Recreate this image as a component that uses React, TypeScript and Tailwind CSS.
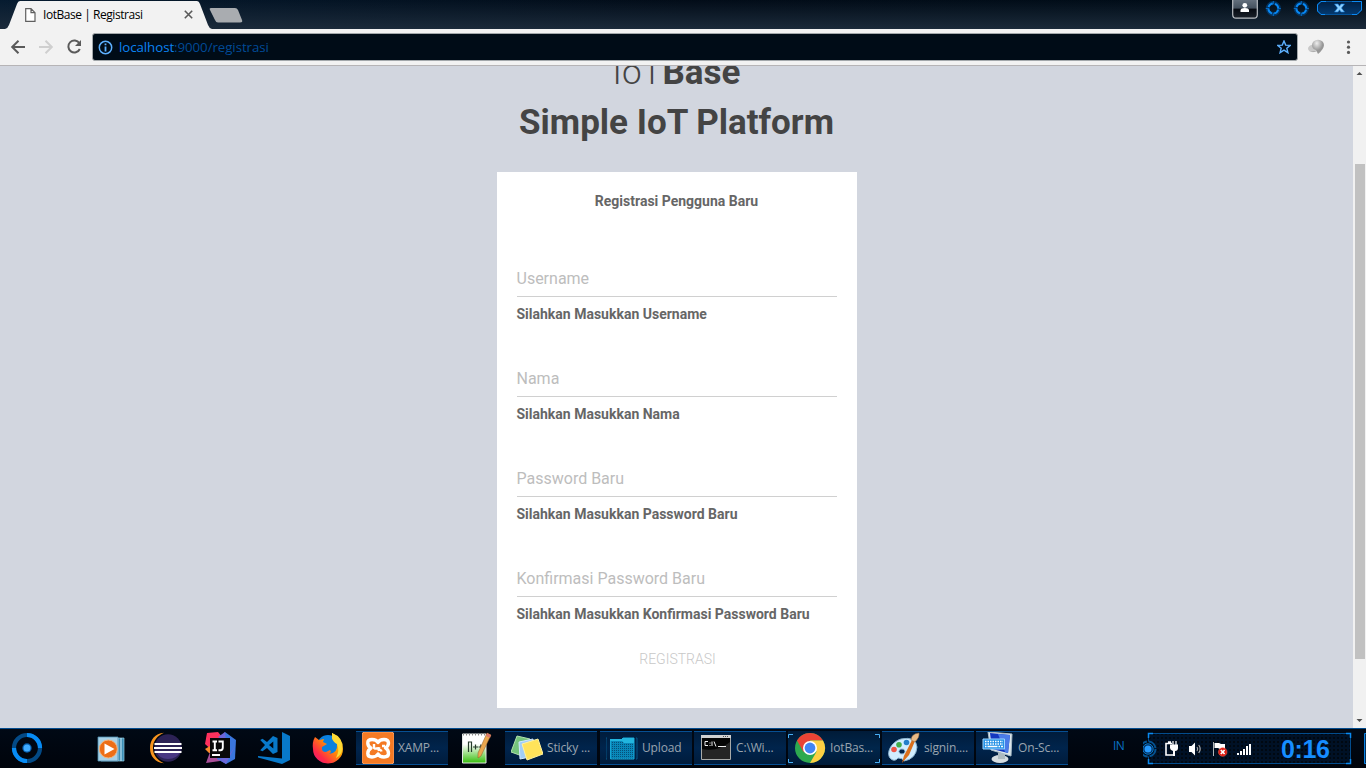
import React from "react";

const ui = "font-['Open_Sans','Noto_Sans',sans-serif]";

function TabStrip() {
  return (
    <div className="relative flex h-[29px] shrink-0 bg-gradient-to-r from-[#061b30] via-[#020c18] to-[#000d18]">
      <div className="absolute inset-0 bg-gradient-to-b from-transparent to-[#1b2a3a]" />
      <div className="relative flex h-[29px] w-[212px] items-center">
        <svg className="absolute inset-0" width="212" height="29" viewBox="0 0 212 29">
          <path d="M5 29 Q8 28 9 25 L17 4 Q18 1 20 1 H197 Q199 1 200 4 L208 25 Q209 28 212 29Z" fill="#f2f2f2" />
        </svg>
        <svg className="relative ml-[25px]" width="11" height="14" viewBox="0 0 11 14" fill="#fff" stroke="#5f5f5f" strokeWidth="1.2">
          <path d="M.7.7H6L10 4.7V13.3H.7ZM6 .7V4.7H10" />
        </svg>
        <span className={`relative ml-[7px] w-[141px] whitespace-nowrap text-[12px] leading-[14px] tracking-[-0.45px] text-black ${ui}`}>IotBase | Registrasi</span>
        <svg className="relative" width="9" height="9" viewBox="0 0 9 9" stroke="#5a5a5a" strokeWidth="1.6"><path d="M.8.8 8.2 8.2M8.2.8.8 8.2" /></svg>
      </div>
      <svg className="relative -ml-[3px]" width="35" height="29" viewBox="0 0 35 29">
        <path d="M2 8H26Q28 8 29 10L33 20Q34 22.5 31 22.5H9Q7 22.5 6 20L1 10Q0 8 2 8Z" fill="#a9acb0" />
      </svg>
      <div className="grow" />
      <svg className="relative" width="136" height="20" viewBox="1230 0 136 20">
        <defs>
          <linearGradient id="usr" x1="0" y1="0" x2="0" y2="1"><stop offset="0" stopColor="#6b7784" /><stop offset=".5" stopColor="#45525f" /><stop offset=".55" stopColor="#070b12" /><stop offset="1" stopColor="#1b222b" /></linearGradient>
          <linearGradient id="cls" x1="0" y1="0" x2="0" y2="1"><stop offset="0" stopColor="#012044" /><stop offset="1" stopColor="#043a70" /></linearGradient>
        </defs>
        <path d="M1232.7 -2V14.5Q1232.7 18.2 1236 18.2H1254Q1257.3 18.2 1257.3 14.5V-2Z" fill="url(#usr)" stroke="#b9bdc2" strokeWidth="1.2" />
        <circle cx="1244.8" cy="5.3" r="2.4" fill="#fff" /><path d="M1240.5 12V10Q1241 8 1244.8 8T1249 10V12Z" fill="#fff" />
        {[1273.3, 1301.3].map((x) => (
          <g key={x} fill="none">
            <circle cx={x} cy="8.5" r="5.6" stroke="#02417e" strokeWidth="4" opacity=".7" />
            <circle cx={x} cy="8.5" r="5" stroke="#0889f5" strokeWidth="1.9" strokeDasharray="5.5 2.35" strokeDashoffset="-1.2" />
            <path d={`M${x} 1V4M${x} 13V16M${x - 7.5} 8.5H${x - 4}M${x + 4} 8.5H${x + 7.5}`} stroke="#087ade" strokeWidth=".8" />
          </g>
        ))}
        <path d="M1317.5 4V11L1321 14.5H1357L1361.5 10V1.5H1321Z" fill="url(#cls)" stroke="#04559d" />
        <path d="M1317.5 11V5L1321 1.5H1326M1352 1.5H1361.5V10L1357 14.5H1352M1317.5 11 1321 14.5H1325" fill="none" stroke="#0b89f3" />
        <path d="M1334.5 4H1338L1339.5 6.2 1341 4H1344.5L1341.5 8 1344.5 12H1341L1339.5 9.8 1338 12H1334.5L1337.5 8Z" fill="#8dd0ff" stroke="#1379d7" strokeWidth=".6" />
      </svg>
    </div>
  );
}

function Toolbar() {
  return (
    <div className="flex h-[37px] shrink-0 items-center border-b border-[#b6b4b6] bg-[#f2f2f2]">
      <svg width="92" height="36" viewBox="0 29 92 36" fill="none" strokeWidth="2">
        <path d="M25 47H12.5M18.5 40.7 12.2 47 18.5 53.3" stroke="#5a5a5a" />
        <path d="M39 47H51.5M45.5 40.7 51.8 47 45.5 53.3" stroke="#cfcfcf" />
        <path d="M79.4 43.2A6 6 0 1 0 79.8 49" stroke="#5a5a5a" />
        <path d="M81 40V46H75Z" fill="#5a5a5a" />
      </svg>
      <div className={`flex h-[28px] w-[1206px] items-center rounded-[3px] border border-[#a3a8ab] bg-[#000c17] text-[13.3px] ${ui}`}>
        <svg className="ml-[5px] shrink-0" width="15" height="15" viewBox="0 0 15 15" fill="none" stroke="#5db1ff">
          <circle cx="7.5" cy="7.5" r="6.2" strokeWidth="1.5" /><path d="M7.5 6.4V11.4M7.5 3.6V5.2" strokeWidth="1.8" />
        </svg>
        <span className="ml-[6px] whitespace-nowrap pt-[2px] tracking-[-0.07px] text-[#004a96]"><span className="text-[#0b83f3]">localhost</span>:9000/registrasi</span>
        <svg className="mr-[6px] ml-auto" width="14" height="14" viewBox="0 0 14 14" fill="none" stroke="#5db1ff" strokeWidth="1.4">
          <path d="M7 1 8.7 5.1 13.2 5.4 9.8 8.2 10.9 12.7 7 10.2 3.1 12.7 4.2 8.2.8 5.4 5.3 5.1Z" />
        </svg>
      </div>
      <svg width="68" height="36" viewBox="1298 29 68 36">
        <defs><radialGradient id="globe" cx=".4" cy=".25"><stop stopColor="#eee" /><stop offset="1" stopColor="#969696" /></radialGradient></defs>
        <ellipse cx="1313" cy="48.5" rx="5" ry="3.7" fill="#c9c9c9" /><path d="M1309 51 1317 51 1314 52Z" fill="#aaa" />
        <path d="M1312 45A6 5.3 0 0 1 1324 45Q1324 49 1318 54L1316 50Q1312 49 1312 45Z" fill="url(#globe)" />
        <g fill="#5a5a5a"><circle cx="1348.5" cy="42" r="1.6" /><circle cx="1348.5" cy="47.2" r="1.6" /><circle cx="1348.5" cy="52.4" r="1.6" /></g>
      </svg>
    </div>
  );
}

const fields = ["Username", "Nama", "Password Baru", "Konfirmasi Password Baru"];

function RegistrationPage() {
  return (
    <div className="flex min-h-0 flex-1 bg-[#d2d6df] font-[Roboto,sans-serif]">
      <main className="flex min-w-0 grow flex-col items-center overflow-hidden">
        <h1 className="-mt-[18px] h-[106px] shrink-0 text-center text-[35px] leading-[50px] font-bold text-[#444]">
          <div className="whitespace-nowrap"><span className="font-light">IoT</span>Base</div>
          <div className="whitespace-nowrap">Simple IoT Platform</div>
        </h1>
        <form className="mt-[18px] flex h-[536px] w-[360px] shrink-0 flex-col bg-white px-5 pt-[19px] text-[14px] leading-5 text-[#666]">
          <div className="mb-[47px] text-center font-bold">Registrasi Pengguna Baru</div>
          {fields.map((f) => (
            <label key={f} className="block h-[100px]">
              <span className="block h-[39px] border-b border-[#d0d0d0] pt-[9px] text-[16px] leading-[23px] text-[#bdbdbd]">{f}</span>
              <span className="mt-[7px] block font-bold whitespace-nowrap">Silahkan Masukkan {f}</span>
            </label>
          ))}
          <button type="button" className="-mt-[9px] pl-[2px] text-center leading-5 font-light text-[#c8c8c8]">REGISTRASI</button>
        </form>
      </main>
      <div className="flex w-[13px] shrink-0 flex-col items-center bg-[#f1f1f1]">
        <svg width="13" height="98" viewBox="0 0 13 98"><path d="M3.5 9 6.5 6 9.5 9Z" fill="#505050" /></svg>
        <div className="h-[495px] w-[10px] bg-[#c1c1c1]" />
        <svg className="mt-auto" width="13" height="14" viewBox="0 0 13 14"><path d="M3.5 5H9.5L6.5 8Z" fill="#505050" /></svg>
      </div>
    </div>
  );
}

function Icon({ children }: { children: React.ReactNode }) {
  return <svg className="shrink-0" width="32" height="32" viewBox="0 0 32 32">{children}</svg>;
}

const StartOrb = () => (
  <Icon>
    <g fill="none" strokeWidth="4.2">
      <circle cx="16" cy="16" r="13" stroke="#034a86" />
      <path d="M16 3A13 13 0 0 1 29 16M16 29A13 13 0 0 1 3 16" stroke="#078cf5" />
    </g>
    <circle cx="16" cy="16" r="4.7" fill="#045aa8" /><circle cx="16" cy="16" r="3.5" fill="#40abff" />
  </Icon>
);

const MediaPlayer = () => (
  <Icon>
    <g transform="translate(-2 0)">
      <path d="M7 6H30V29H7Z" fill="#3d8eb5" stroke="#91cce2" strokeWidth=".7" />
      <path d="M27 6V29M24 6V29" stroke="#d2eefb" />
      <path d="M4 5H24V29H4Z" fill="#a7d0e6" stroke="#4b91b2" strokeWidth=".8" />
      <circle cx="14.3" cy="17" r="9" fill="#ed6e16" stroke="#f3b37b" /><path d="M10.5 11.5V22.5L20.5 17Z" fill="#fff" />
    </g>
  </Icon>
);

const Eclipse = () => (
  <Icon>
    <path d="M14 .8C5 1.5 0 8 0 16S5 30.5 14 31.2C7 28 3 23 3 16S7 4 14 .8Z" fill="#f7941e" />
    <circle cx="18" cy="16" r="13.7" fill="#2c2255" /><path d="M7 20H30Q27 27 18 27T7 20Z" fill="#493783" />
    <path d="M4.5 11.9H31.5M4 16H32M4.5 20.1H31.5" stroke="#fff" strokeWidth="2" />
  </Icon>
);

const IntelliJ = () => (
  <Icon>
    <path d="M3 1 14 0 18 5 12 22 1 12Z" fill="#fe315d" /><path d="M1 17 6 14 10 21 5 21Z" fill="#f98b2b" />
    <path d="M6 20 19 24 16 29 2 31Z" fill="#aa4f99" /><path d="M17 6 21 0 32 8 31 27 22 32 13 27Z" fill="#3a76dd" />
    <path d="M14 5 21 0 22 9ZM24 25 31 14 22 32 14 27Z" fill="#6d67d8" />
    <path d="M6 6H26V26H6Z" fill="#080808" />
    <path d="M8.5 9.5H13M10.8 9.5V18M8.5 18.2H13M14.5 9.5H18.8V15.5Q18.8 18.2 16.5 18.2H14.5M8 23H16" fill="none" stroke="#fff" strokeWidth="1.9" />
  </Icon>
);

const VSCode = () => (
  <Icon>
    <path d="M24 0 32 4V28L24 32 0 25.5V24L24 26.5Z" fill="#0879ca" />
    <path fillRule="evenodd" d="M15 4 19.5 6V20L15 22 9 16 4.5 19.3 2.2 18.2 7 13 2.2 8 4.5 6.8 9 10ZM15.3 9.5 11 13 15.3 16.5Z" fill="#0879ca" />
  </Icon>
);

const Firefox = () => (
  <Icon>
    <defs><linearGradient id="fox" x1="1" y1="0" x2="0" y2="1"><stop stopColor="#fff44f" /><stop offset=".4" stopColor="#ff9800" /><stop offset=".75" stopColor="#ff2947" /><stop offset="1" stopColor="#e31587" /></linearGradient></defs>
    <circle cx="16" cy="14" r="11" fill="#0a80df" />
    <path d="M3 5 7 8 12 7 11 10 15 12 10 15Q9 20 14 20L18 18Q20 20 17 22Q26 21 25 12 24 8 20 7L20 1Q31 5 31 17A15 14.5 0 0 1 1 17Q0 10 3 5Z" fill="url(#fox)" />
    <path d="M20 1Q31 6 30 17 30 23 24 26 28 18 25 12 21 10 20 6Z" fill="#ffdb35" />
  </Icon>
);

const Xampp = () => (
  <Icon>
    <rect width="32" height="32" rx="3" fill="#f47a24" stroke="#f8a064" />
    <path d="M16 10.5Q14.5 7.5 10 7.5T5.8 11Q5.8 14.5 9 16Q5.8 18 5.8 21.5Q5.8 25 10 25T16 22Q17.5 25 22 25T26.5 21.5Q26.5 17.5 23.5 16Q26.5 14 26.5 11Q26.5 7.5 22 7.5T16 10.5Z" fill="none" stroke="#fff" strokeWidth="3.4" strokeLinejoin="round" />
    <path d="M12 12V15.5Q12 17 14.5 16.5T18 16.5M20 14H23M15.5 18Q19 17 19.5 19.5" fill="none" stroke="#fff" strokeWidth="2.4" />
  </Icon>
);

const NotepadPP = () => (
  <Icon>
    <defs><linearGradient id="npp" x1="0" y1="0" x2="0" y2="1"><stop offset=".35" stopColor="#fff" /><stop offset="1" stopColor="#36be0b" /></linearGradient></defs>
    <path d="M2.5 2H26V31H2.5Z" fill="url(#npp)" stroke="#e4e8e4" /><path d="M3 2.5H26" stroke="#8a8a8a" strokeWidth="2" strokeDasharray="1 2" />
    <path d="M8.5 20V10H11.5V20M13 15H18M15.5 12.5V17.5M18.5 15H23M20.8 12.5V17.5" fill="none" stroke="#263b2c" strokeWidth="1.2" />
    <path d="M18 26 18 21 27 1 31 3 21 24Z" fill="#e9a74f" stroke="#8d5b24" strokeWidth=".5" /><path d="M27 1 31 3 30 6 26 4Z" fill="#d9796a" />
  </Icon>
);

const Sticky = () => (
  <Icon>
    <path d="M6 4 19 7 14 25 0 20Z" fill="#75c47c" stroke="#b3e2ac" /><path d="M8 10 22 7 24 24 9 27Z" fill="#a1cef8" stroke="#d2e9ff" />
    <path d="M11 12 27 7 32 22 16 28Z" fill="#ffe35a" stroke="#fff2a0" />
  </Icon>
);

const Folder = () => (
  <Icon>
    <defs><pattern id="mesh" width="2" height="2" patternUnits="userSpaceOnUse"><path d="M0 0H2V2H0Z" fill="#0987b9" /><path d="M0 0H1V1H0Z" fill="#055079" /></pattern></defs>
    <path d="M4.5 8H17V6H28V27H4.5Z" fill="url(#mesh)" stroke="#16a6d6" /><path d="M4 7H16V6H28V11H18L16 9H4Z" fill="#22b5de" />
    <path d="M1 6H0V27H1M30 6H31V27H30" stroke="#075787" fill="none" />
  </Icon>
);

const Terminal = () => (
  <Icon>
    <path d="M1.5 3.5H30.5V27.5H1.5Z" fill="#050505" stroke="#a8aaa8" /><path d="M1 3H31V6H1Z" fill="#d2d2d2" />
    <path d="M23 4.5H29" stroke="#555" strokeDasharray="1 1" /><path d="M2 17Q18 20 30 10V27H2Z" fill="#252525" />
    <path d="M8 9.5H5V13.5H8M10 10.5V11.5M10 13V14M12 9.5V14M14 9.5 16 14.5M18 14.5H26" stroke="#eee" fill="none" />
  </Icon>
);

const Chrome = () => (
  <Icon>
    <circle cx="16" cy="16" r="15" fill="#2da94f" /><path d="M3 8.5A15 15 0 0 1 29 8.5H16L9.5 20Z" fill="#ea4335" />
    <path d="M29 8.5A15 15 0 0 1 16 31L22.5 19.8 16 8.5Z" fill="#fdd043" /><circle cx="16" cy="16" r="7" fill="#fff" /><circle cx="16" cy="16" r="5.4" fill="#4285f4" />
  </Icon>
);

const Paint = () => (
  <Icon>
    <path d="M13 7C3 10-3 22 3 27Q7 30 10 26 15 26 16 29 28 27 29 15 28 4 13 7ZM14 17A3 2.5 0 1 1 13.9 17Z" fill="#d1edff" stroke="#8ab3d0" fillRule="evenodd" />
    <circle cx="6" cy="17.5" r="2.8" fill="#ee5548" /><circle cx="11" cy="12.7" r="2.8" fill="#44ad4b" /><circle cx="18.5" cy="10.5" r="2.8" fill="#247fca" />
    <path d="M14 31Q15 24 19 18L24 8 27 9 21 23Z" fill="#da701c" /><path d="M23 8Q23 2 31 1 32 5 27 10Z" fill="#e9ba85" stroke="#95663d" strokeWidth=".5" />
  </Icon>
);

const OnScreenKeyboard = () => (
  <Icon>
    <ellipse cx="18" cy="27" rx="8.5" ry="4" fill="#d5dce0" /><path d="M16 21H23V27H16Z" fill="#aebbc0" />
    <path d="M6 0 30 2 29 24 9 18Z" fill="#dce7eb" stroke="#a9bcc8" /><path d="M8 1 28 3 26 21 10 17Z" fill="#1438bf" /><path d="M16 2 28 3 26 21 23 20Z" fill="#4a7ce8" />
    <path d="M1 7H22.5V17H1Z" fill="#2591e5" stroke="#9ad5ff" /><path d="M3 9.5H21M3 12H21" stroke="#fff" strokeWidth="1.3" strokeDasharray="1.5 1" /><path d="M3 14.5H21" stroke="#fff" strokeWidth="1.3" strokeDasharray="1.5 1 10 1" />
  </Icon>
);

function Task({ icon, label, active = false }: { icon: React.ReactNode; label: string; active?: boolean }) {
  return (
    <div className={`relative flex h-[34px] w-[92px] shrink-0 items-center bg-gradient-to-b pl-[6px] ${active ? "from-[#001b38] via-[#00264b] to-[#001b38]" : "border-y border-[#064f93] from-[#001c3c] via-[#00244c] to-[#001c3c]"}`}>
      {icon}
      <span className={`ml-[4px] whitespace-nowrap text-[12px] leading-4 tracking-[-0.15px] text-[#9aa4ae] ${ui}`}>{label}</span>
      {active && (
        <svg className="absolute inset-0" width="92" height="34" viewBox="0 0 92 34" fill="none" stroke="#49aff5">
          <path d="M.5 7V3.5H5M87 3.5H91.5V7M.5 28V31.5H5M87 31.5H91.5V28" />
        </svg>
      )}
    </div>
  );
}

function Tray() {
  return (
    <svg width="223" height="38" viewBox="1143 729 223 38">
      <defs>
        <pattern id="dots" width="4" height="4" patternUnits="userSpaceOnUse"><path d="M0 0H4V4H0Z" fill="#001126" /><path d="M1 1H3V3H1Z" fill="#000811" /></pattern>
        <linearGradient id="peek"><stop stopColor="#033a70" /><stop offset="1" stopColor="#001226" /></linearGradient>
      </defs>
      <path d="M1148.5 733.5H1350.5V763.5H1148.5Z" fill="url(#dots)" stroke="#034c8c" />
      <path d="M1148.5 738V733.5H1153M1346 733.5H1350.5V738M1350.5 759V763.5H1346M1153 763.5H1148.5V759" fill="none" stroke="#098af2" strokeWidth="1.5" />
      <circle cx="1148" cy="749" r="7.5" fill="#000d1b" stroke="#045291" strokeWidth="2" strokeDasharray="10 2" /><circle cx="1148" cy="749" r="5.2" fill="#04305e" stroke="#0878cc" /><circle cx="1148" cy="749" r="3.5" fill="#269aff" />
      <g fill="none" stroke="#fff" strokeWidth="1.6">
        <path d="M1172 743.5H1166V755H1174M1168 742H1171" /><path d="M1173 741V745M1176 741V745" strokeWidth="1.2" />
      </g>
      <path d="M1170 744.5H1178V748Q1178 751 1175 751V756H1173V751Q1170 750 1170 748ZM1189 746H1191.5L1195 742.5V755.5L1191.5 752H1189Z" fill="#fff" />
      <path d="M1197 747Q1198.5 749 1197 751M1198.7 745Q1201.7 749 1198.7 753" fill="none" stroke="#aaa" strokeWidth="1.2" />
      <path d="M1213.5 742V756" stroke="#aeb5b9" /><path d="M1214.5 743H1219L1221 744H1225V749H1220L1218 748H1214.5Z" fill="#fff" />
      <circle cx="1222.7" cy="752" r="4.3" fill="#dc1b12" stroke="#ff6655" strokeWidth=".5" /><path d="M1220.8 750 1224.6 754M1224.6 750 1220.8 754" stroke="#fff" strokeWidth="1.7" />
      <path d="M1237 753H1239V755H1237ZM1240 751H1242V755H1240ZM1243 749H1245V755H1243ZM1246 746H1248V755H1246ZM1249 744H1251V755H1249Z" fill="#fff" />
      <text x="1281" y="758" fill="#168dff" fontFamily="Liberation Sans, sans-serif" fontWeight="700" fontSize="25" textLength="49">0:16</text>
      <path d="M1364.5 733.5H1368V763.5H1364.5Z" fill="url(#peek)" stroke="#0a83e3" />
    </svg>
  );
}

function Taskbar() {
  return (
    <div className="flex h-10 shrink-0 items-center border-t border-[#034c8e] bg-gradient-to-b from-[#000915] to-[#00040b] pb-px">
      <div className="flex gap-[53px] pl-[11px]">
        <StartOrb />
        <div className="flex gap-[22px]"><MediaPlayer /><Eclipse /><IntelliJ /><VSCode /><Firefox /></div>
      </div>
      <div className="ml-[12px]"><Task icon={<Xampp />} label="XAMP..." /></div>
      <div className="mr-[13px] ml-[12px]"><NotepadPP /></div>
      <div className="flex gap-[2px]">
        <div className="mr-px"><Task icon={<Sticky />} label="Sticky ..." /></div>
        <Task icon={<Folder />} label="Upload" />
        <Task icon={<Terminal />} label="C:\Wi..." />
        <Task icon={<Chrome />} label="IotBas..." active />
        <Task icon={<Paint />} label="signin...." />
        <Task icon={<OnScreenKeyboard />} label="On-Sc..." />
      </div>
      <span className={`mr-[19px] mb-[4px] ml-auto text-[12px] leading-4 tracking-[-0.7px] text-[#0872c4] ${ui}`}>IN</span>
      <Tray />
    </div>
  );
}

export default function App() {
  return (
    <div className="flex h-[768px] w-[1366px] flex-col overflow-hidden">
      <TabStrip />
      <Toolbar />
      <RegistrationPage />
      <Taskbar />
    </div>
  );
}
